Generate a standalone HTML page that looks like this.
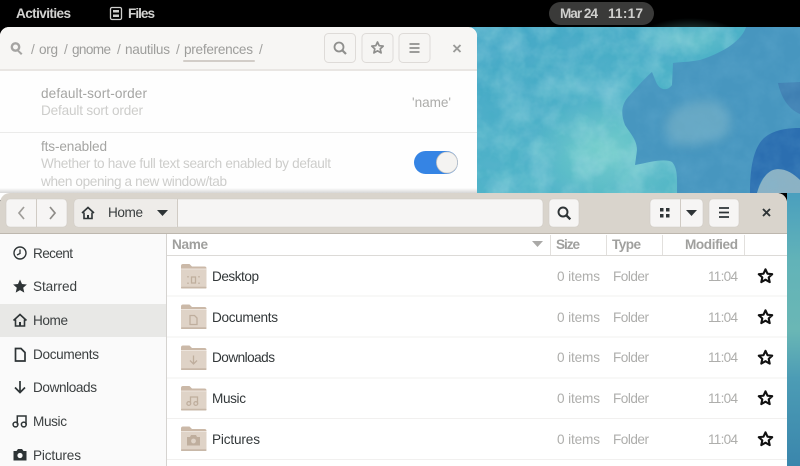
<!DOCTYPE html>
<html><head><meta charset="utf-8"><style>
html,body{margin:0;padding:0;background:#000;width:800px;height:466px;overflow:hidden}
svg{display:block}
text{font-family:"Liberation Sans",sans-serif;font-size:13.6px}
</style></head><body>
<svg width="800" height="466" viewBox="0 0 800 466" xmlns="http://www.w3.org/2000/svg">
<defs>
<linearGradient id="bg" x1="0" y1="0" x2="1" y2="1"><stop offset="0" stop-color="#42a6c5"/><stop offset=".55" stop-color="#4fb4c8"/><stop offset="1" stop-color="#5cbcc5"/></linearGradient>
<linearGradient id="strip" x1="0" y1="0" x2="0" y2="1"><stop offset="0" stop-color="#4a9fbe"/><stop offset=".25" stop-color="#62b3b8"/><stop offset=".5" stop-color="#6ab7b5"/><stop offset=".68" stop-color="#4c9cb5"/><stop offset="1" stop-color="#3a86ac"/></linearGradient>
<linearGradient id="sh" x1="0" y1="0" x2="0" y2="1"><stop offset="0" stop-color="#000" stop-opacity="0"/><stop offset="1" stop-color="#000" stop-opacity=".16"/></linearGradient>
<radialGradient id="lt" cx=".5" cy=".5" r=".5"><stop offset="0" stop-color="#7ad2cb" stop-opacity=".85"/><stop offset="1" stop-color="#7ad2cb" stop-opacity="0"/></radialGradient>
<filter id="tex" x="0" y="0" width="100%" height="100%"><feTurbulence type="fractalNoise" baseFrequency=".04" numOctaves="4" seed="5"/><feColorMatrix values="0 0 0 0 .55 0 0 0 0 .85 0 0 0 0 .85 1.8 0 0 0 -.6"/></filter>
<filter id="tex2" x="0" y="0" width="100%" height="100%"><feTurbulence type="fractalNoise" baseFrequency=".05" numOctaves="4" seed="11"/><feColorMatrix values="0 0 0 0 .18 0 0 0 0 .48 0 0 0 0 .7 1.8 0 0 0 -.6"/></filter>
<filter id="soft" x="-30%" y="-30%" width="160%" height="160%"><feGaussianBlur stdDeviation="5"/></filter>
<g id="fo"><path d="M0 2a2 2 0 0 1 2-2h6.500l2.500 2.500H23.500a2 2 0 0 1 2 2V8H0z" fill="#cbb9a8"/><rect x="0" y="5" width="25.500" height="19.500" rx="1.500" fill="#dfd3c7"/><rect x="0" y="22.800" width="25.500" height="1.700" rx=".8" fill="#c8b8a8"/><rect x="0" y="4.500" width="25.500" height="1" fill="#ece4dc"/></g>
<path id="st" d="M8 1.300l2 4.400 4.700.5-3.500 3.200 1 4.700L8 11.700l-4.200 2.400 1-4.700L1.300 6.200 6 5.700z" fill="none" stroke="#111" stroke-width="2.100" stroke-linejoin="round"/>
</defs>

<rect width="800" height="27" fill="#000"/>
<rect x="549" y="2" width="105" height="23" rx="11.500" fill="#3a3a39"/>
<text x="16" y="18" fill="#d2d2d0" textLength="55" style="font-weight:600">Activities</text>
<rect x="110.500" y="7.500" width="11" height="12" rx="1.500" fill="none" stroke="#cfcfcd" stroke-width="1.300"/>
<rect x="113" y="10" width="6" height="2.500" fill="#cfcfcd"/><rect x="113" y="14.500" width="6" height="2.500" fill="#cfcfcd"/>
<text x="128" y="18" fill="#d2d2d0" textLength="27" style="font-weight:600">Files</text>
<text x="560" y="18" fill="#cfcfcd" textLength="38" style="font-weight:600">Mar 24</text>
<text x="608" y="18" fill="#cfcfcd" textLength="35" style="font-weight:600">11:17</text>

<!-- wallpaper -->
<rect x="470" y="27" width="330" height="166" fill="url(#bg)"/>
<ellipse cx="605" cy="150" rx="75" ry="55" fill="url(#lt)"/>
<ellipse cx="690" cy="38" rx="50" ry="20" fill="url(#lt)" opacity=".5"/>
<rect x="470" y="27" width="330" height="166" filter="url(#tex)" opacity=".35"/>
<path d="M746 27C742 40 725 52 700 60C690 62 680 62 673 63L672 85C668 91 660 91 656 82L652 72C645 78 637 87 630 95C622 103 620 112 625 125C630 133 637 140 637 150L635 165C650 162 665 158 672 162C678 168 677 180 677 193H800V27Z" fill="#4796bf"/>
<path d="M672 112q26-18 50-8 14 16 4 32-26 12-52 8-16-16-2-32z" fill="#72aec6" opacity=".75" filter="url(#soft)"/>
<path d="M778 83l22-1v32c-12-5-19-17-22-31z" fill="#3f7fb2"/>
<path d="M750 193c0-30 5-50 18-58 10-6 22-7 32-7v52c-10-8-22-12-30-8-7 4-11 12-13 21z" fill="#2b6eb0"/>
<path d="M757 193c3-10 8-20 16-23 9-3 19 2 27 10v13z" fill="#8cb2c4"/>
<rect x="470" y="27" width="330" height="166" filter="url(#tex2)" opacity=".2"/>
<rect x="787" y="193" width="13" height="273" fill="url(#strip)"/>

<!-- back window -->
<path d="M0 37a9 9 0 0 1 9-10H468a9 9 0 0 1 9 10V200H0z" fill="#fefefe"/>
<path d="M0 37a9 9 0 0 1 9-10H468a9 9 0 0 1 9 10V69H0z" fill="#f7f6f4"/>
<rect y="69" width="477" height="2" fill="#e9e6e3"/>
<circle cx="15.500" cy="47" r="3.700" fill="none" stroke="#a5a4a2" stroke-width="2.400"/><path d="M17.500 49l5 4.500-1.500 1.500-4.500-4.500z" fill="#a5a4a2"/>
<text x="31" y="54" fill="#a2a2a0">/</text>
<text x="39" y="54" fill="#9d9d9b" textLength="19">org</text>
<text x="64" y="54" fill="#a2a2a0">/</text>
<text x="72" y="54" fill="#9d9d9b" textLength="39">gnome</text>
<text x="117" y="54" fill="#a2a2a0">/</text>
<text x="125" y="54" fill="#9d9d9b" textLength="45">nautilus</text>
<text x="176" y="54" fill="#a2a2a0">/</text>
<text x="184" y="54" fill="#9d9d9b" textLength="69">preferences</text>
<text x="259" y="54" fill="#a2a2a0">/</text>
<rect x="183" y="60" width="72" height="2" rx="1" fill="#d2cdc8"/>
<g fill="#f6f5f3" stroke="#dedbd8"><rect x="324.500" y="33.500" width="31" height="29" rx="4"/><rect x="362" y="33.500" width="31" height="29" rx="4"/><rect x="399" y="33.500" width="31" height="29" rx="4"/></g>
<circle cx="339" cy="47" r="4.500" fill="none" stroke="#8f8f8d" stroke-width="1.800"/><path d="M342.500 50.500l3.500 3.500" stroke="#8f8f8d" stroke-width="2.200"/>
<path d="M377.500 42l1.700 3.700 4 .4-3 2.800.9 4-3.600-2.100-3.600 2.100.9-4-3-2.800 4-.4z" fill="none" stroke="#8f8f8d" stroke-width="1.700" stroke-linejoin="round"/>
<path d="M409.500 44h10M409.500 48h10M409.500 52h10" stroke="#8f8f8d" stroke-width="1.700"/>
<path d="M453.500 45l7 7M460.500 45l-7 7" stroke="#9a9a98" stroke-width="1.900"/>

<text x="41" y="98" fill="#a5a5a3" textLength="106">default-sort-order</text>
<text x="41" y="115" fill="#cdcdcb" textLength="102">Default sort order</text>
<text x="412" y="107" fill="#acacaa" textLength="39">'name'</text>
<rect y="132" width="477" height="1" fill="#ebebea"/>
<text x="41" y="151" fill="#a5a5a3" textLength="66">fts-enabled</text>
<text x="41" y="168" fill="#cdcdcb" textLength="290">Whether to have full text search enabled by default</text>
<text x="41" y="186" fill="#cdcdcb" textLength="186">when opening a new window/tab</text>
<rect x="414" y="151" width="44" height="23" rx="11.500" fill="#3584e4"/>
<circle cx="447" cy="162.500" r="10.500" fill="#f4f3f1" stroke="#c9c7c4" stroke-width=".8"/>
<rect y="188" width="477" height="5" fill="url(#sh)"/>

<!-- front window -->
<path d="M0 203a10 10 0 0 1 10-10H777a10 10 0 0 1 10 10V466H0z" fill="#fff"/>
<path d="M0 203a10 10 0 0 1 10-10H777a10 10 0 0 1 10 10V233H0z" fill="#d9d4cc"/>
<rect y="233" width="787" height="1" fill="#bdb7ae"/>
<g fill="#f6f5f4" stroke="#cfcac3" stroke-width=".6"><rect x="6" y="199" width="61" height="28" rx="4"/><rect x="74" y="199" width="469" height="28" rx="4"/><rect x="549" y="199" width="30" height="28" rx="4"/><rect x="650" y="199" width="53" height="28" rx="4"/><rect x="709" y="199" width="30" height="28" rx="4"/></g>
<rect x="74.300" y="199.300" width="103.500" height="27.400" rx="4" fill="#eeece9"/>
<path d="M36.500 199v28M177.500 199v28M680.500 199v28" stroke="#d0cbc4"/>
<path d="M24 207l-5 6 5 6" fill="none" stroke="#9f9d99" stroke-width="1.700"/>
<path d="M50 207l5 6-5 6" fill="none" stroke="#8e8c88" stroke-width="1.700"/>
<path d="M82 213l6-5.500 6 5.500M84 212.500v6h8v-6" fill="none" stroke="#2e3436" stroke-width="1.600"/><rect x="87" y="215" width="2" height="3" fill="#2e3436"/>
<text x="108" y="217" fill="#3a3e3f" textLength="35">Home</text>
<path d="M157 210h11l-5.500 6z" fill="#2e3436"/>
<circle cx="563" cy="212" r="4.500" fill="none" stroke="#2e3436" stroke-width="1.900"/><path d="M566.500 215.500l3.800 3.800" stroke="#2e3436" stroke-width="2.300"/>
<g fill="#2e3436"><rect x="660" y="208" width="3.500" height="3.500"/><rect x="666" y="208" width="3.500" height="3.500"/><rect x="660" y="214" width="3.500" height="3.500"/><rect x="666" y="214" width="3.500" height="3.500"/><path d="M686 210h11l-5.500 6z"/></g>
<path d="M719 208h10M719 212.500h10M719 217h10" stroke="#2e3436" stroke-width="1.700"/>
<path d="M763 209l7 7M770 209l-7 7" stroke="#2e3436" stroke-width="1.900"/>

<!-- sidebar -->
<rect y="234" width="166" height="232" fill="#fafafa"/>
<rect y="304" width="166" height="33" fill="#e8e8e6"/>
<rect x="166" y="234" width="1" height="232" fill="#d5d3d0"/>
<g fill="#3c4041">
<text x="33" y="258" textLength="40">Recent</text>
<text x="33" y="291" textLength="44">Starred</text>
<text x="33" y="325" textLength="35">Home</text>
<text x="33" y="359" textLength="66">Documents</text>
<text x="33" y="392" textLength="64">Downloads</text>
<text x="33" y="426" textLength="34">Music</text>
<text x="33" y="460" textLength="48">Pictures</text>
</g>
<circle cx="20" cy="253" r="6" fill="none" stroke="#2e3436" stroke-width="1.400"/><path d="M20 249.500V253.500L17 255" fill="none" stroke="#2e3436" stroke-width="1.300"/>
<path d="M20 279.500l2 4.500 4.900.5-3.700 3.300 1.100 4.800-4.300-2.500-4.300 2.500 1.100-4.800-3.700-3.300 4.900-.5z" fill="#2e3436"/>
<path d="M13.500 320.500l6.500-6 6.500 6M15.500 319.500v6.500h9v-6.500" fill="none" stroke="#2e3436" stroke-width="1.600"/><rect x="19" y="322" width="2" height="4" fill="#2e3436"/>
<path d="M15.500 348.500h5.500l4 4v8.500h-9.500z" fill="none" stroke="#2e3436" stroke-width="1.700"/>
<path d="M20 381v11M15 387.500l5 5 5-5" fill="none" stroke="#2e3436" stroke-width="1.700"/>
<path d="M17.300 424.500v-8.500h8.700v8.500" fill="none" stroke="#2e3436" stroke-width="1.500"/><circle cx="15.500" cy="424.500" r="2.400" fill="none" stroke="#2e3436" stroke-width="1.500"/><circle cx="23.800" cy="424.500" r="2.400" fill="none" stroke="#2e3436" stroke-width="1.500"/>
<path d="M13.500 451h3l1.500-2h4l1.500 2h3v9.500h-13z" fill="#2e3436"/><circle cx="20" cy="455.500" r="2.600" fill="#fafafa"/>

<!-- list header -->
<rect x="167" y="234" width="620" height="21" fill="#fff"/>
<rect x="167" y="255" width="620" height="1" fill="#dcdad7"/>
<g fill="#a0a09e">
<text x="172" y="249" textLength="36" style="font-weight:600">Name</text>
<text x="556" y="249" textLength="24" style="font-weight:600">Size</text>
<text x="612" y="249" textLength="29" style="font-weight:600">Type</text>
<text x="685" y="249" textLength="53" style="font-weight:600">Modified</text>
</g>
<path d="M532 241h11l-5.500 6z" fill="#aaa9a7"/>
<path d="M550.500 235v20M606.500 235v20M662.500 235v20M744.500 235v20" stroke="#e2e0dd"/>
<path d="M167 296h620M167 337h620M167 378h620M167 418.500h620M167 459.500h620" stroke="#f1f0ef"/>

<!-- rows -->
<use href="#fo" x="181" y="264"/><use href="#fo" x="181" y="304.500"/><use href="#fo" x="181" y="345.500"/><use href="#fo" x="181" y="386"/><use href="#fo" x="181" y="426.500"/>
<g fill="none" stroke="#bfae9d" stroke-width="1.300">
<path d="M191.500 277h4v6h-4zM188 276v1.500M188 282.500v1.500M199 276v1.500M199 282.500v1.500"/>
<path d="M190 315.500h4.500l2.500 2.500v6.500h-7z"/>
<path d="M193.500 355.500v8.500M190 360.500l3.500 3.500 3.500-3.500"/>
<path d="M190.500 403.500v-6.500h7v6.500"/><circle cx="188.800" cy="403.500" r="1.900"/><circle cx="195.800" cy="403.500" r="1.900"/>
</g>
<path d="M187 437h3l1-2h5l1 2h3v8.500h-13z" fill="#bfae9d"/><circle cx="193.500" cy="441" r="2.400" fill="#dfd3c7"/>
<g fill="#33383a">
<text x="212" y="281" textLength="47">Desktop</text>
<text x="212" y="322" textLength="66">Documents</text>
<text x="212" y="362" textLength="63">Downloads</text>
<text x="212" y="403" textLength="34">Music</text>
<text x="212" y="444" textLength="48">Pictures</text>
</g>
<g fill="#aeaeac">
<text x="557" y="281" textLength="43">0 items</text><text x="613" y="281" textLength="36">Folder</text><text x="708" y="281" textLength="30">11:04</text>
<text x="557" y="322" textLength="43">0 items</text><text x="613" y="322" textLength="36">Folder</text><text x="708" y="322" textLength="30">11:04</text>
<text x="557" y="362" textLength="43">0 items</text><text x="613" y="362" textLength="36">Folder</text><text x="708" y="362" textLength="30">11:04</text>
<text x="557" y="403" textLength="43">0 items</text><text x="613" y="403" textLength="36">Folder</text><text x="708" y="403" textLength="30">11:04</text>
<text x="557" y="444" textLength="43">0 items</text><text x="613" y="444" textLength="36">Folder</text><text x="708" y="444" textLength="30">11:04</text>
</g>
<use href="#st" x="757.500" y="268"/><use href="#st" x="757.500" y="309"/><use href="#st" x="757.500" y="349.500"/><use href="#st" x="757.500" y="390"/><use href="#st" x="757.500" y="431"/>
</svg>
</body></html>
